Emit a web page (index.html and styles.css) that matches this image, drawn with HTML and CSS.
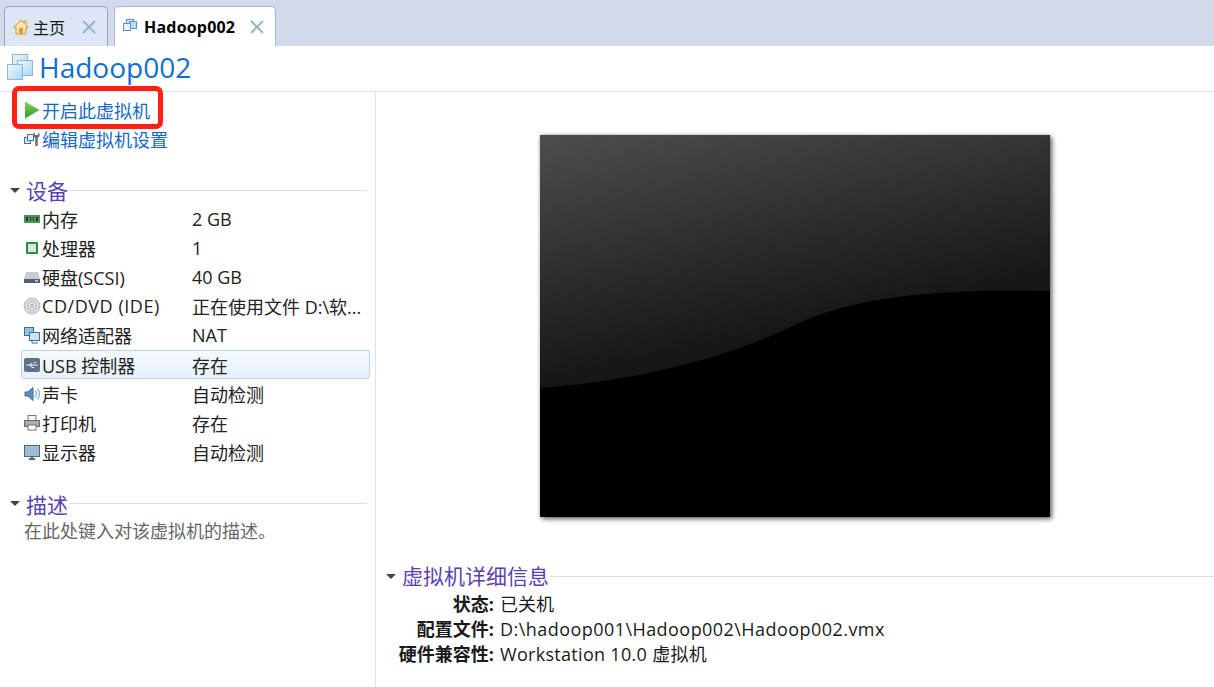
FILE: index.html
```html
<!DOCTYPE html>
<html lang="zh-CN">
<head>
    <meta charset="UTF-8">
    <title>Hadoop002</title>
    <link rel="stylesheet" href="styles.css">
</head>
<body>
    <div class="tabbar">
        <div class="tab">
            <svg class="tab-icon" viewBox="0 0 16 16"><path d="M8 1 .8 8.200l1.400.8L3 8.300V15h10V8.300l.8.700 1.400-.8L13 6V2h-2v2z" fill="#fbe3ae" stroke="#d9962e"/><rect x="6" y="9" width="4" height="6" fill="#d9a032"/></svg>
            <span class="tab-label">主页</span>
            <svg class="tab-close" viewBox="0 0 14 14"><path d="M1 1l12 12M13 1 1 13" stroke="#9db4c8" stroke-width="2"/></svg>
        </div>
        <div class="tab tab-active">
            <svg class="tab-icon vm-small" viewBox="0 0 14 14"><rect x="3.500" y="1.500" width="7" height="7" fill="#cfe6f7" stroke="#5f94c0"/><rect x="6.500" y="3.500" width="7" height="7" fill="#b9dcf4" stroke="#5f94c0"/><rect x="0.500" y="5.500" width="7" height="7" fill="#e4f2fb" stroke="#5f94c0"/></svg>
            <span class="tab-label">Hadoop002</span>
            <svg class="tab-close" viewBox="0 0 14 14"><path d="M1 1l12 12M13 1 1 13" stroke="#9db4c8" stroke-width="2"/></svg>
        </div>
    </div>

    <header class="title-row">
        <svg class="vm-big" viewBox="0 0 28 28">
            <defs>
                <linearGradient id="glass" x1="0" y1="0" x2="1" y2="1">
                    <stop offset="0" stop-color="#f2f9fe"/>
                    <stop offset="1" stop-color="#a9d6f3"/>
                </linearGradient>
            </defs>
            <rect x="6.500" y="1.500" width="15" height="15" fill="url(#glass)" stroke="#8fb6d4"/>
            <rect x="11.500" y="7.500" width="15" height="15" fill="url(#glass)" stroke="#8fb6d4"/>
            <rect x="1.500" y="11.500" width="15" height="15" fill="url(#glass)" stroke="#8fb6d4"/>
        </svg>
        <h1>Hadoop002</h1>
    </header>

    <div class="main">
        <aside class="side">
            <div class="commands">
                <a class="command">
                    <svg class="cmd-icon" viewBox="0 0 16 18">
                        <defs>
                            <linearGradient id="play" x1="0" y1="0" x2="0" y2="1">
                                <stop offset="0" stop-color="#8cd05a"/>
                                <stop offset="1" stop-color="#2f9a22"/>
                            </linearGradient>
                        </defs>
                        <path d="M1 .5 15.500 9 1 17.500z" fill="url(#play)"/>
                    </svg>开启此虚拟机
                </a>
                <a class="command">
                    <svg class="cmd-icon" viewBox="0 0 16 18"><rect x="0.500" y="7.500" width="6" height="6" fill="#cfe6f7" stroke="#3f78ac"/><rect x="3.500" y="4.500" width="6" height="6" fill="#e4f2fb" stroke="#3f78ac"/><path d="M12.500 8v8" stroke="#6a6a6a" stroke-width="2.400"/><path d="M10.800 2.300a3.200 3.200 0 1 0 3.400 0v2.700h-3.400z" fill="#6a6a6a"/></svg>编辑虚拟机设置
                </a>
                <div class="highlight"></div>
            </div>

            <section class="group">
                <div class="section-head"><span class="arrow"></span><h2>设备</h2><span class="rule"></span></div>
                <ul class="devices">
                    <li><svg viewBox="0 0 18 18"><rect x="1" y="5" width="16" height="8" fill="#3c9a4c"/><rect x="3" y="7" width="12" height="4" fill="#333"/><path d="M6 7v4M9 7v4M12 7v4" stroke="#9fd0a8"/></svg><span class="name">内存</span><span class="val">2 GB</span></li>
                    <li><svg viewBox="0 0 18 18"><rect x="3" y="3" width="12" height="12" rx="1" fill="#2f8a4a"/><rect x="5" y="5" width="8" height="8" fill="#dfe6df"/></svg><span class="name">处理器</span><span class="val">1</span></li>
                    <li><svg viewBox="0 0 18 18"><path d="M3 4h12l2 7H1z" fill="#c4ccd6"/><rect x="1" y="11" width="16" height="4" fill="#55606c"/><rect x="12" y="12" width="3" height="1.500" fill="#b8d8ee"/></svg><span class="name">硬盘(SCSI)</span><span class="val">40 GB</span></li>
                    <li><svg viewBox="0 0 18 18"><circle cx="9" cy="9" r="8" fill="#d5d8dc" stroke="#b8bcc2"/><circle cx="9" cy="9" r="4" fill="#eceef0" stroke="#b8bcc0"/><circle cx="9" cy="9" r="1.500" fill="#fff" stroke="#999"/></svg><span class="name name-wide">CD/DVD (IDE)</span><span class="val">正在使用文件 D:\软...</span></li>
                    <li><svg viewBox="0 0 18 18"><rect x="1.500" y="1.500" width="9" height="8" fill="#8fc2e6" stroke="#3f6f96"/><rect x="6.500" y="6.500" width="10" height="8" fill="#c5e3f6" stroke="#3f6f96"/><path d="M9 15v2h6" stroke="#3f6f96" fill="none"/></svg><span class="name">网络适配器</span><span class="val">NAT</span></li>
                    <li class="selected"><svg viewBox="0 0 18 18"><rect x="1" y="2" width="16" height="14" rx="2" fill="#5d7288"/><path d="M3.500 9h11M11 6.500h2M7 9l2-2.500M7 9l2 2.500h2" stroke="#fff" fill="none"/></svg><span class="name">USB 控制器</span><span class="val">存在</span></li>
                    <li><svg viewBox="0 0 18 18"><path d="M2 7h3l5-4.500v13L5 11H2z" fill="#5c8fc4" stroke="#3f6f96"/><path d="M12 5.500c1.500 2 1.500 5 0 7M14.500 3.500c2.500 3 2.500 8 0 11" stroke="#8fb4d6" fill="none" stroke-width="1.300"/></svg><span class="name">声卡</span><span class="val">自动检测</span></li>
                    <li><svg viewBox="0 0 18 18"><rect x="5" y="1.500" width="8" height="6" fill="#f2f2f2" stroke="#777"/><rect x="1.500" y="6.500" width="15" height="6" fill="#a6adb5" stroke="#666"/><rect x="5" y="11" width="8" height="5" fill="#fff" stroke="#777"/></svg><span class="name">打印机</span><span class="val">存在</span></li>
                    <li><svg viewBox="0 0 18 18"><rect x="1.500" y="2.500" width="15" height="11" fill="#9fbdd4" stroke="#4f6478"/><path d="M6 16h6M9 14v2" stroke="#4f6478" stroke-width="2"/></svg><span class="name">显示器</span><span class="val">自动检测</span></li>
                </ul>
            </section>

            <section class="group">
                <div class="section-head"><span class="arrow"></span><h2>描述</h2><span class="rule"></span></div>
                <p class="desc">在此处键入对该虚拟机的描述。</p>
            </section>
        </aside>

        <div class="content">
            <div class="preview">
                <svg viewBox="0 0 510 382" preserveAspectRatio="none">
                    <defs>
                        <linearGradient id="shine" x1="0.100" y1="0" x2="0.450" y2="0.800">
                            <stop offset="0" stop-color="#4b4b4b"/>
                            <stop offset="1" stop-color="#161616"/>
                        </linearGradient>
                    </defs>
                    <rect width="510" height="382" fill="#000"/>
                    <path d="M0 0H510V156C420 154 320 158 255 190C180 226 90 246 0 253Z" fill="url(#shine)"/>
                </svg>
            </div>

            <section class="details">
                <div class="section-head"><span class="arrow"></span><h2>虚拟机详细信息</h2><span class="rule"></span></div>
                <dl class="info">
                    <dt>状态:</dt><dd>已关机</dd>
                    <dt>配置文件:</dt><dd class="path">D:\hadoop001\Hadoop002\Hadoop002.vmx</dd>
                    <dt>硬件兼容性:</dt><dd class="compat">Workstation 10.0 虚拟机</dd>
                </dl>
            </section>
        </div>
    </div>
</body>
</html>
```

FILE: styles.css
```css
* {
    box-sizing: border-box;
}
html, body {
    height: 100%;
}
body {
    margin: 0;
    background-color: #fff;
    color: #1a1a1a;
    font-family: "Open Sans", "Noto Sans CJK SC", sans-serif;
    font-size: 18px;
    overflow: hidden;
    display: flex;
    flex-direction: column;
}
h1, h2, p, ul, dl, dd {
    margin: 0;
    padding: 0;
}

.tabbar {
    height: 46px;
    flex: none;
    background-color: #d3daec;
    display: flex;
    align-items: flex-end;
    gap: 6px;
    padding-left: 4px;
}
.tab {
    width: 104px;
    height: 40px;
    background-color: #dce6f4;
    border: 1px solid #94a7bf;
    border-bottom: none;
    border-radius: 5px 5px 0 0;
    display: flex;
    align-items: center;
    padding: 0 11px 0 8px;
    font-size: 16px;
}
.tab-active {
    width: 162px;
    height: 40px;
    background-color: #fff;
    border-color: #a9b7cc;
    font-weight: 700;
    color: #000;
}
.tab-icon {
    width: 16px;
    height: 16px;
    flex: none;
}
.vm-small {
    width: 14px;
    height: 14px;
    margin-bottom: 4px;
}
.tab-label {
    margin-left: 4px;
    white-space: nowrap;
}
.tab-active .tab-label {
    margin-left: 7px;
    letter-spacing: 0.2px;
}
.tab-close {
    width: 14px;
    height: 14px;
    margin-left: auto;
}

.title-row {
    height: 46px;
    flex: none;
    border-bottom: 1px solid #dde3ec;
    display: flex;
    align-items: center;
    padding: 0 0 3px 6px;
    gap: 5px;
}
.vm-big {
    width: 28px;
    height: 28px;
}
h1 {
    font-size: 28px;
    font-weight: 400;
    color: #0f6fd0;
    line-height: 42px;
}

.main {
    flex: 1;
    display: flex;
    min-height: 0;
}
.side {
    width: 376px;
    flex: none;
    border-right: 1px solid #dde3ec;
    padding-top: 3px;
}
.commands {
    position: relative;
    padding-left: 24px;
    height: 81px;
}
.command {
    display: flex;
    align-items: center;
    height: 29px;
    color: #1668c8;
    white-space: nowrap;
    position: relative;
    font-size: 18px;
}
.cmd-icon {
    width: 16px;
    height: 18px;
    margin-right: 2px;
    flex: none;
}
.highlight {
    position: absolute;
    left: 12px;
    top: -9px;
    width: 151px;
    height: 43px;
    border: 5px solid #ff2116;
    border-radius: 7px;
}

.group {
    margin-bottom: 23px;
}
.section-head {
    display: flex;
    align-items: center;
    height: 28px;
    padding-left: 10px;
}
.arrow {
    width: 0;
    height: 0;
    border-left: 5px solid transparent;
    border-right: 5px solid transparent;
    border-top: 5px solid #444;
    margin-right: 6px;
    flex: none;
}
h2 {
    font-size: 21px;
    font-weight: 400;
    color: #5a3fb0;
    white-space: nowrap;
    line-height: 28px;
}
.group h2 {
    margin-top: 2px;
}
.rule {
    flex: 1;
    height: 1px;
    background-color: #dde1e6;
    margin: 0 8px 0 1px;
}

.devices {
    list-style: none;
    padding-left: 21px;
    padding-right: 5px;
}
.devices li {
    display: flex;
    align-items: center;
    height: 29.200px;
    border: 1px solid transparent;
    border-radius: 2px;
    white-space: nowrap;
    color: #222;
}
.devices svg {
    width: 18px;
    height: 18px;
    flex: none;
    margin: 0 1px;
}
.devices .selected {
    background: linear-gradient(#f5f9fe, #e6f0fb);
    border-color: #b9d3f0;
}
.name {
    width: 150px;
    flex: none;
}
.name-wide {
    letter-spacing: 0.55px;
}
.val {
    white-space: nowrap;
}
.desc {
    padding-left: 24px;
    color: #666;
    line-height: 26px;
}

.content {
    flex: 1;
    padding-top: 43px;
    min-width: 0;
}
.preview {
    width: 510px;
    height: 382px;
    margin-left: 164px;
    box-shadow: 2px 2px 5px rgba(0, 0, 0, 0.6), 0 0 3px rgba(0, 0, 0, 0.2);
}
.preview svg {
    display: block;
    width: 100%;
    height: 100%;
}
.details {
    margin-top: 45px;
}
.details h2 {
    margin-top: -1px;
}
.details .rule {
    margin-right: 0;
}
.info {
    display: grid;
    grid-template-columns: 118px 1fr;
    column-gap: 6px;
    line-height: 25px;
    margin-top: 2px;
}
.info dt {
    text-align: right;
    font-weight: 700;
    white-space: nowrap;
}
.path {
    letter-spacing: 0.45px;
}
.compat {
    letter-spacing: 0.3px;
}
```
